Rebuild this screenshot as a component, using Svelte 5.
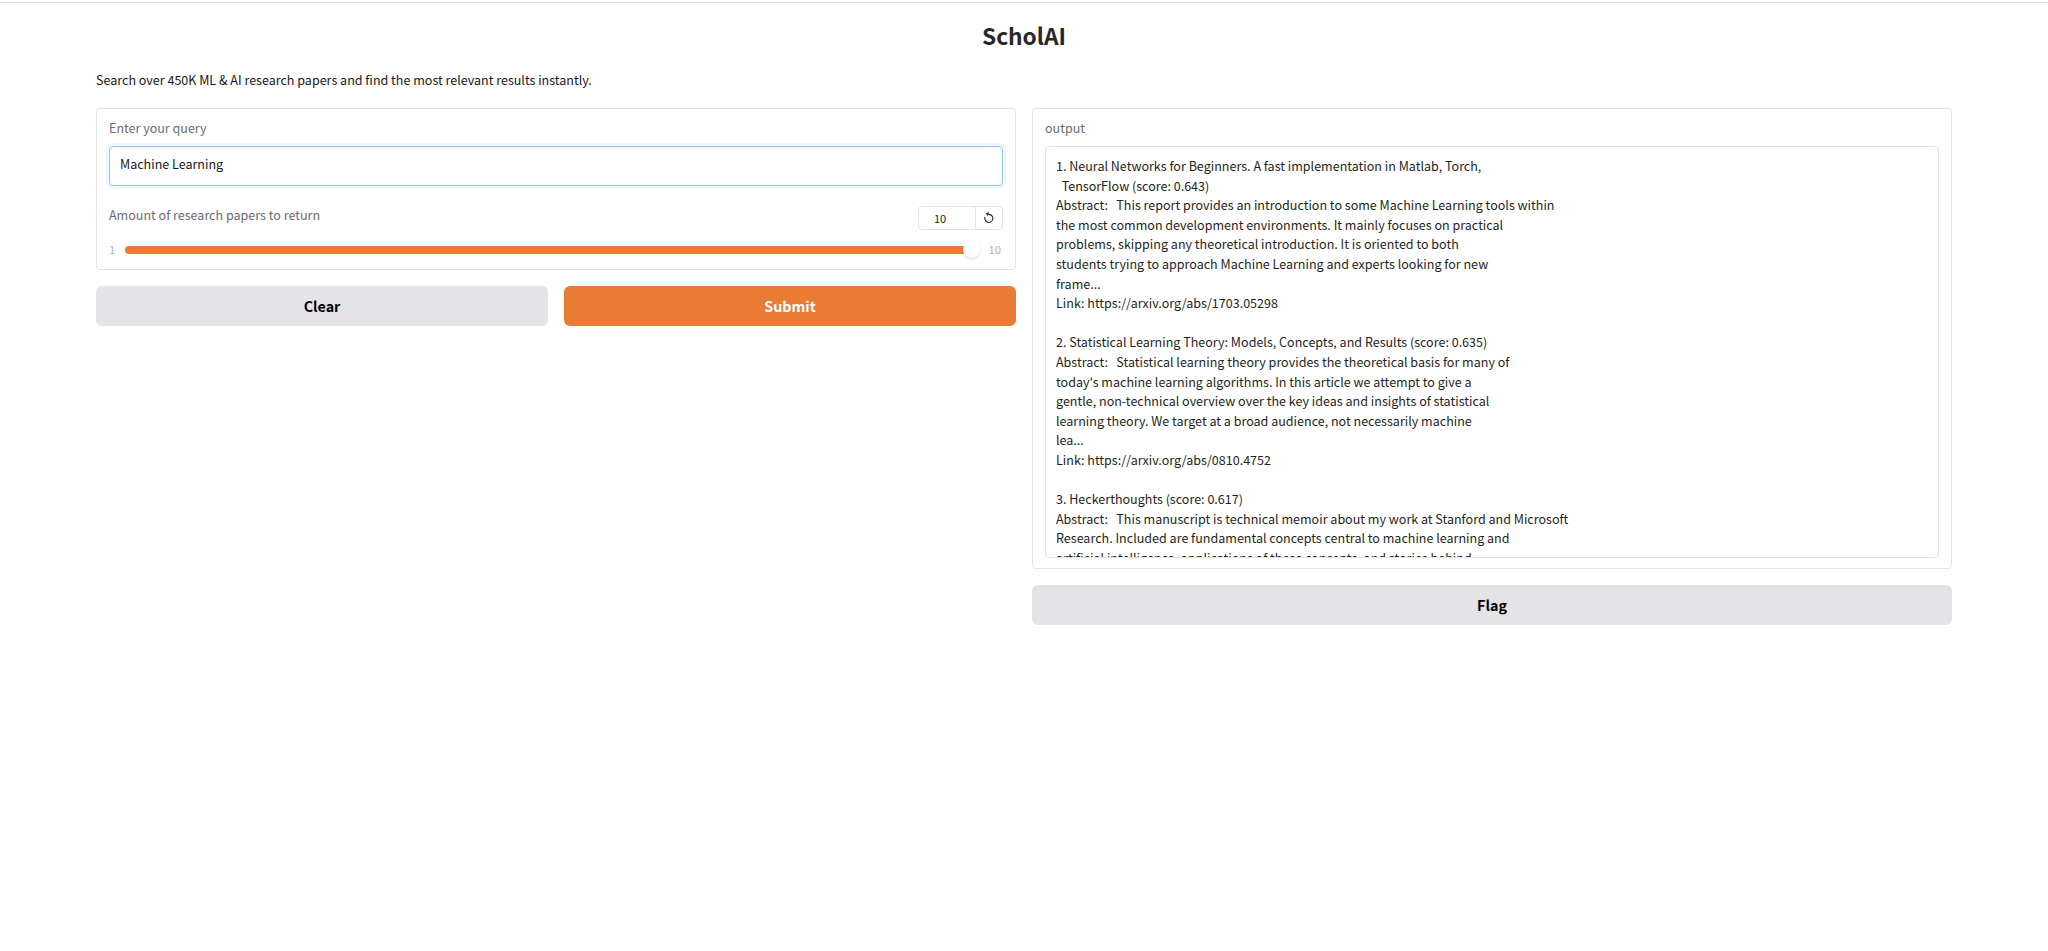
<script>
  const query = 'Machine Learning';
  const amount = 10;
  const output = `1. Neural Networks for Beginners. A fast implementation in Matlab, Torch,
  TensorFlow (score: 0.643)
Abstract:   This report provides an introduction to some Machine Learning tools within
the most common development environments. It mainly focuses on practical
problems, skipping any theoretical introduction. It is oriented to both
students trying to approach Machine Learning and experts looking for new
frame...
Link: https://arxiv.org/abs/1703.05298

2. Statistical Learning Theory: Models, Concepts, and Results (score: 0.635)
Abstract:   Statistical learning theory provides the theoretical basis for many of
today's machine learning algorithms. In this article we attempt to give a
gentle, non-technical overview over the key ideas and insights of statistical
learning theory. We target at a broad audience, not necessarily machine
lea...
Link: https://arxiv.org/abs/0810.4752

3. Heckerthoughts (score: 0.617)
Abstract:   This manuscript is technical memoir about my work at Stanford and Microsoft
Research. Included are fundamental concepts central to machine learning and
artificial intelligence, applications of these concepts, and stories behind`;
</script>

<div class="rule"></div>
<main>
  <h1>ScholAI</h1>
  <p class="desc">Search over 450K ML &amp; AI research papers and find the most relevant results instantly.</p>
  <div class="cols">
    <section>
      <div class="card inputs">
        <div class="label">Enter your query</div>
        <div class="textbox">{query}</div>
        <div class="amount">
          <div class="label">Amount of research papers to return</div>
          <div class="number">
            <span class="value">{amount}</span>
            <span class="reset">
              <svg width="10" height="12" viewBox="0 0 10 12" fill="none" stroke="#27272a" stroke-width="1.1">
                <path d="M1.1 5A4 4 0 1 0 6 2.6L3 1.8" />
                <path d="M4.9 -.1L1.9 1.5L3.7 4.3Z" fill="#27272a" stroke="none" />
              </svg>
            </span>
          </div>
        </div>
        <div class="slider">
          <span>1</span>
          <div class="track"><div class="thumb"></div></div>
          <span>10</span>
        </div>
      </div>
      <div class="buttons">
        <div class="btn">Clear</div>
        <div class="btn primary">Submit</div>
      </div>
    </section>
    <section>
      <div class="card results">
        <div class="label">output</div>
        <div class="output">{output}</div>
      </div>
      <div class="btn">Flag</div>
    </section>
  </div>
</main>

<style>
  :global(body) { background: #fff; }
  .rule { height: 1px; margin-top: 2px; background: #e4e4e7; }
  :global(#app) { display: flow-root; }
  main {
    padding: 16px 96px 0;
    font-family: "Noto Sans CJK SC", "Noto Sans", sans-serif;
    font-size: 12.54px;
    line-height: 20px;
    color: #1f1f22;
  }
  h1 { margin: 0; font-size: 22.7px; line-height: 34px; font-weight: 700; text-align: center; color: #27272a; }
  .desc { margin: 17px 0 18px; color: #18181b; }
  .cols { display: grid; grid-template-columns: 1fr 1fr; gap: 16px; align-items: start; }
  section { display: flex; flex-direction: column; gap: 16px; }
  .card { box-sizing: border-box; border: 1px solid #e4e4e7; border-radius: 4px; padding: 9px 12px; }
  .inputs { height: 162px; }
  .results { height: 461px; }
  .label { color: #6b6b74; line-height: 20px; height: 20px; }
  .textbox {
    box-sizing: border-box; height: 40px; margin-top: 8px; padding: 7px 10px;
    border: 1px solid #93c5fd; border-radius: 4px; line-height: 20px; color: #18181b;
    box-shadow: 0 0 0 3px #eff6ff, inset 0 2px 4px rgba(0, 0, 0, .05);
  }
  .amount { display: flex; justify-content: space-between; align-items: flex-start; margin-top: 20px; }
  .amount .label { line-height: 18px; }
  .number {
    box-sizing: border-box; width: 85px; height: 24px; display: flex;
    border: 1px solid #e4e4e7; border-radius: 4px; font-size: 11px; line-height: 23px;
  }
  .value { width: 56px; padding-left: 15px; box-sizing: border-box; }
  .reset { flex: 1; border-left: 1px solid #e4e4e7; display: flex; justify-content: center; padding-top: 5px; }
  .slider { display: flex; align-items: center; height: 20px; margin-top: 10px; color: #b0b0b6; font-size: 11.2px; line-height: 18px; padding-right: 2px; }
  .slider span { height: 20px; }
  .track { position: relative; flex: 1; height: 8px; margin: 0 9px 0 10px; border-radius: 4px; background: linear-gradient(to right, #e97b35 99%, transparent 99%); }
  .thumb { position: absolute; right: 0; top: -5px; width: 17px; height: 17px; border-radius: 50%; background: #fff; box-shadow: 0 1px 3px rgba(0, 0, 0, .16); }
  .buttons { display: grid; grid-template-columns: 1fr 1fr; gap: 16px; }
  .btn { height: 40px; border-radius: 6px; background: #e4e4e7; color: #000; font-size: 14.3px; font-weight: 700; line-height: 40px; text-align: center; }
  .primary { background: #e97b35; color: #fff; }
  .output {
    box-sizing: border-box; height: 412px; margin-top: 8px; padding: 9px 10px 0;
    border: 1px solid #e4e4e7; border-radius: 4px; overflow: hidden;
    white-space: pre-wrap; line-height: 19.6px;
  }
</style>
